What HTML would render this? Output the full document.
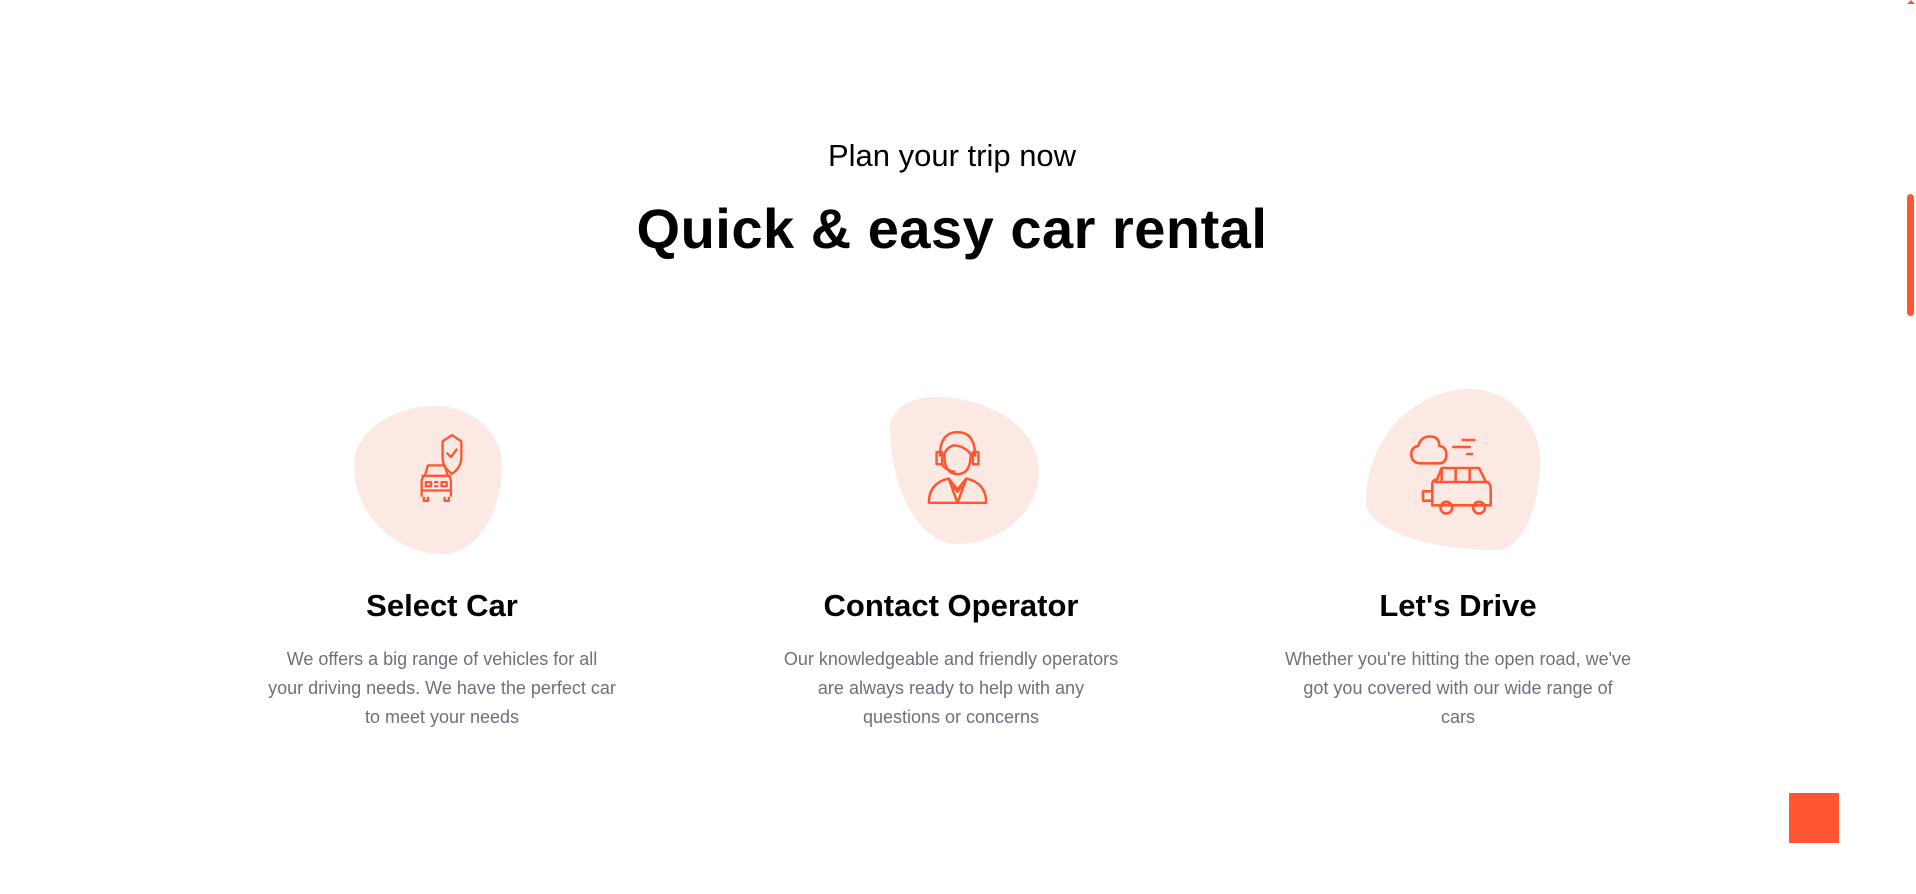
<!DOCTYPE html>
<html><head><meta charset="utf-8">
<style>
html,body{margin:0;padding:0;background:#fff;width:1916px;height:894px;overflow:hidden;font-family:"Liberation Sans",sans-serif;position:relative}
.sub{position:absolute;top:138px;left:0;width:1904px;text-align:center;font-size:31px;color:#010103}
.h1{position:absolute;top:196px;left:0;width:1904px;text-align:center;font-size:56px;font-weight:700;color:#010103;letter-spacing:0.5px}
.blob{position:absolute;background:#fde9e4}
.t{position:absolute;width:500px;text-align:center;font-weight:700;font-size:31px;color:#010103;top:588px}
.d{position:absolute;width:348px;text-align:center;font-size:18px;line-height:29px;color:#706f7b;top:645px}
svg.ic{position:absolute;overflow:visible}
</style></head><body>
<div class="sub">Plan your trip now</div>
<div class="h1">Quick &amp; easy car rental</div>

<div class="blob" style="left:354px;top:406px;width:148px;height:148px;border-radius:55% 45% 40% 60% / 40% 40% 60% 60%"></div>
<div class="blob" style="left:890px;top:397px;width:149px;height:147px;border-radius:30% 70% 55% 45% / 20% 50% 50% 80%"></div>
<div class="blob" style="left:1366px;top:389px;width:174px;height:161px;border-radius:60% 40% 25% 75% / 70% 45% 55% 30%"></div>

<svg class="ic" style="left:409px;top:433px" width="65" height="70" viewBox="6 5 42 67" fill="none" stroke="#ff5531" stroke-width="2.2" stroke-linejoin="round">
<path d="M37 7 L46 13 L46 28 Q46 38 37 44 Q28 38 28 28 L28 13 Z"/><path d="M32 24 L36 28 L42 20"/>
<path d="M8 66 L8 52 Q8 47 11 46 L14 36 L30 36 L33 46 Q36 47 36 52 L36 66 M8 46 L36 46"/>
<rect x="12" y="52" width="5" height="4"/><rect x="27" y="52" width="5" height="4"/><path d="M20 52 H24 M20 56 H24 M8 60 H36"/>
<path d="M10 66 V70 H14 V66 M30 66 V70 H34 V66"/>
</svg>
<svg class="ic" style="left:925px;top:430px" width="65" height="75" viewBox="4 4 56 68" fill="none" stroke="#ff5531" stroke-width="2.2" stroke-linejoin="round">
<path d="M16 28 Q16 6 32 6 Q48 6 48 28"/><rect x="13" y="24" width="5" height="11"/><rect x="46" y="24" width="5" height="11"/>
<path d="M20 26 Q20 44 32 44 Q44 44 44 26 Q38 18 28 18 Q22 20 20 26"/><path d="M18 35 Q20 40 30 42"/>
<path d="M6 70 Q6 52 24 48 L32 58 L40 48 Q58 52 58 70 Z"/><path d="M24 48 L32 70 L40 48 M28 55 L32 60 L36 55"/>
</svg>
<svg class="ic" style="left:1409px;top:434px" width="84" height="82" viewBox="0 1 72 70" fill="none" stroke="#ff5531" stroke-width="2.2" stroke-linejoin="round">
<path d="M10 26 Q2 26 2 18 Q2 12 8 11 Q10 3 18 3 Q26 3 26 11 Q32 12 32 18 Q32 26 26 26 Z"/>
<path d="M46 6 H56 M38 12 H52 M50 18 H54" stroke-linecap="round"/>
<path d="M20 62 L20 44 Q20 40 24 40 L28 30 L60 30 L66 42 Q70 42 70 48 L70 62 Z M28 30 V42 M40 30 V42 M52 30 V42 M22 42 H66"/>
<path d="M20 50 H12 V58 H20"/><circle cx="32" cy="64" r="5"/><circle cx="60" cy="64" r="5"/>
</svg>

<div class="t" style="left:192px">Select Car</div>
<div class="t" style="left:701px">Contact Operator</div>
<div class="t" style="left:1208px">Let's Drive</div>
<div class="d" style="left:268px">We offers a big range of vehicles for all your driving needs. We have the perfect car to meet your needs</div>
<div class="d" style="left:777px">Our knowledgeable and friendly operators are always ready to help with any questions or concerns</div>
<div class="d" style="left:1284px">Whether you're hitting the open road, we've got you covered with our wide range of cars</div>

<div style="position:absolute;left:1907px;top:194px;width:7px;height:122px;background:#ff5531;border-radius:4px"></div>
<div style="position:absolute;left:1907px;top:0;width:0;height:0;border-left:4px solid transparent;border-right:4px solid transparent;border-bottom:4px solid #ff5531"></div>
<div style="position:absolute;left:1789px;top:793px;width:50px;height:50px;background:#ff5531"></div>
</body></html>
